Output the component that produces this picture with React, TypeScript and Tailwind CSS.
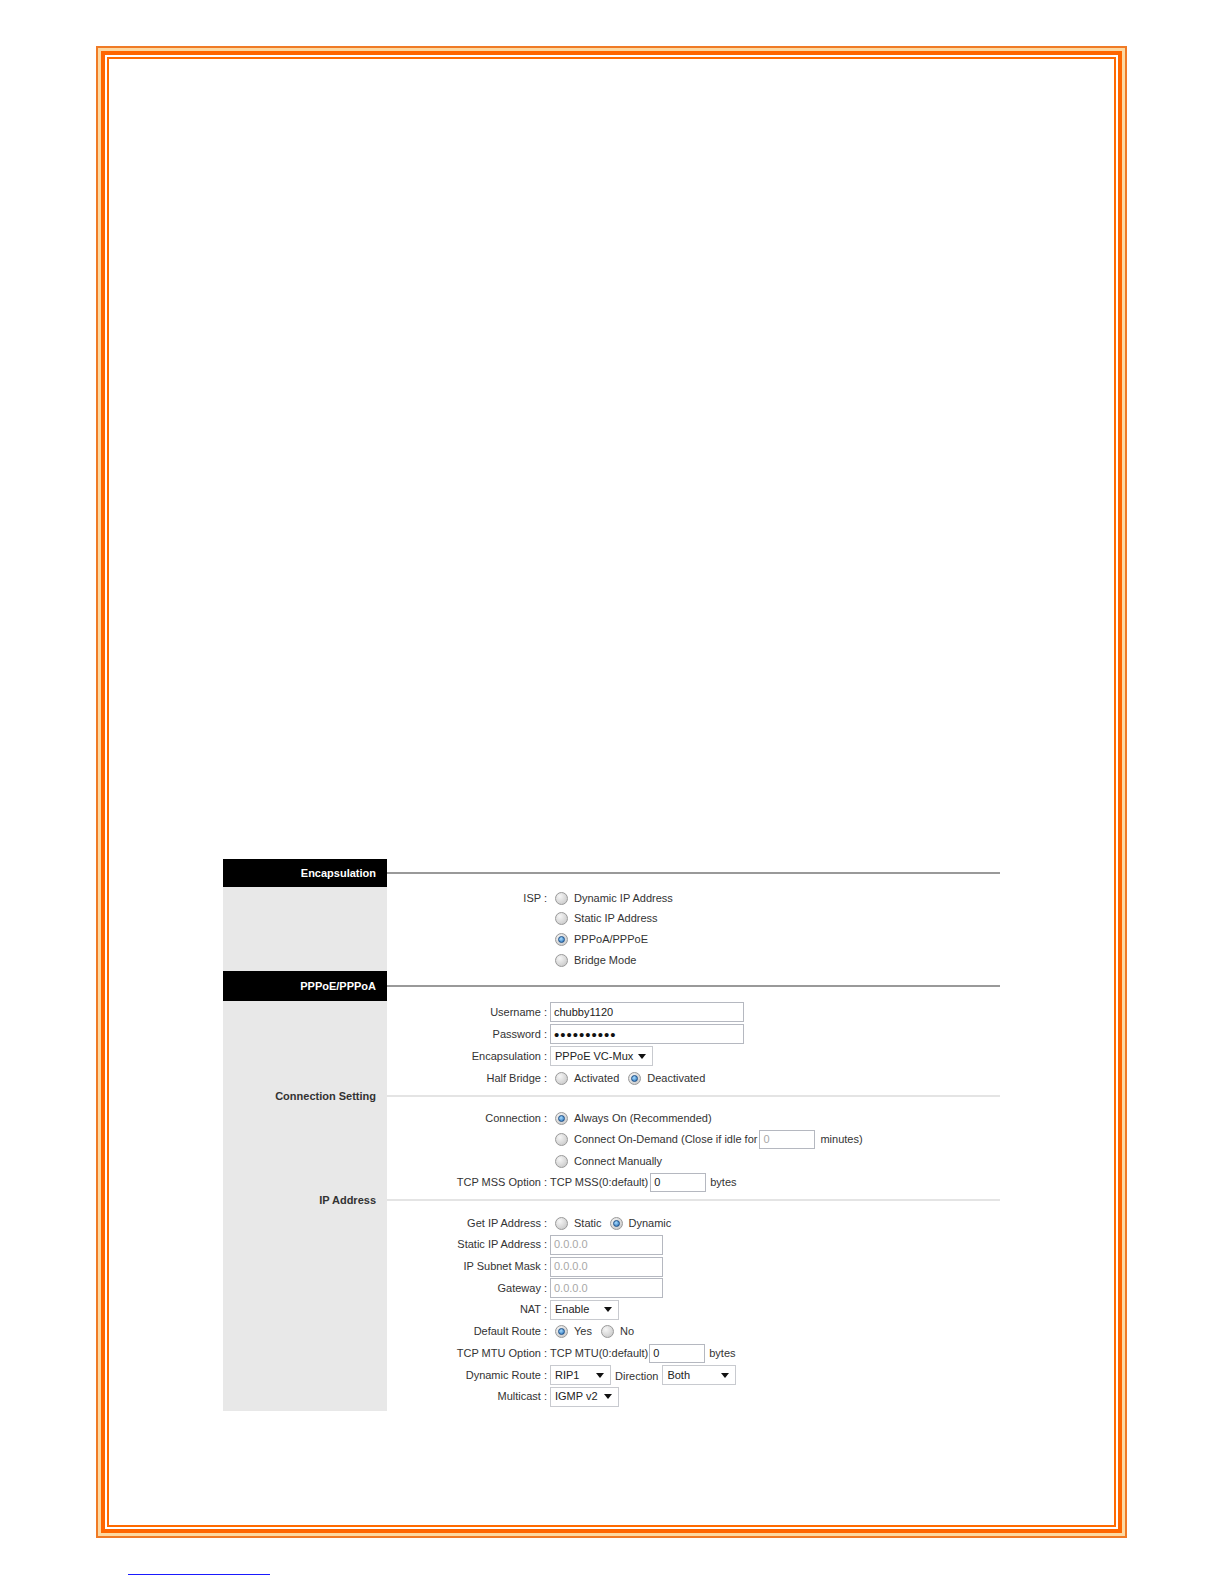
import React from "react";

function Radio({ checked }: { checked?: boolean }) {
  return (
    <span className="inline-flex w-[13px] h-[13px] rounded-full border border-[#999999] bg-[radial-gradient(circle_at_35%_30%,#f6f6f6,#c2c2c2)] items-center justify-center shrink-0">
      {checked && (
        <span className="w-[7px] h-[7px] rounded-full border border-[#1d4f86] bg-[radial-gradient(circle_at_40%_35%,#a8dcff,#2069b4)]" />
      )}
    </span>
  );
}

function RadioOpt({ checked, label, gap = "ml-[5px]" }: { checked?: boolean; label: string; gap?: string }) {
  return (
    <span className={`inline-flex items-center ${gap}`}>
      <Radio checked={checked} />
      <span className="ml-[6px]">{label}</span>
    </span>
  );
}

function TextBox({ value, w, disabled, h = "h-[20px]" }: { value: string; w: string; disabled?: boolean; h?: string }) {
  return (
    <span
      className={`inline-flex items-center ${w} ${h} border border-[#b5b8c0] bg-white px-[3px] ${
        disabled ? "text-[#a8a8a8]" : "text-[#222]"
      }`}
    >
      {value}
    </span>
  );
}

function Select({ value, w }: { value: string; w: string }) {
  return (
    <span className={`inline-flex items-center justify-between ${w} h-[20px] border border-[#c8cacf] bg-white pl-[4px] pr-[6px] text-[#222]`}>
      <span>{value}</span>
      <svg width="8" height="5" viewBox="0 0 8 5" className="shrink-0 ml-[4px]">
        <path d="M0 0 L8 0 L4 5 Z" fill="#111" />
      </svg>
    </span>
  );
}

function Row({ label, children, h = "h-[21.7px]" }: { label?: string; children?: React.ReactNode; h?: string }) {
  return (
    <div className={`flex items-center ${h}`}>
      <div className="w-[163px] text-right pr-[3px] whitespace-nowrap">{label ? `${label} :` : ""}</div>
      <div className="flex items-center whitespace-nowrap">{children}</div>
    </div>
  );
}

function Header({ title, h }: { title: string; h: string }) {
  return (
    <div className={`flex ${h}`}>
      <div className="w-[164px] bg-black text-white font-bold flex items-center justify-end pr-[11px]">{title}</div>
      <div className="flex-1 flex items-center">
        <div className="w-full h-[2px] bg-[#999999]" />
      </div>
    </div>
  );
}

function SubHeader({ title }: { title: string }) {
  return (
    <div className="flex h-[14px]">
      <div className="w-[164px] bg-[#e8e8e8] font-bold flex items-center justify-end pr-[11px] text-[#333]">{title}</div>
      <div className="flex-1 flex items-center">
        <div className="w-full h-[2px] bg-[#e4e4e4]" />
      </div>
    </div>
  );
}

function Block({ children, className = "" }: { children: React.ReactNode; className?: string }) {
  return (
    <div className="flex">
      <div className="w-[164px] bg-[#e8e8e8] shrink-0" />
      <div className={`flex-1 ${className}`}>{children}</div>
    </div>
  );
}

export default function App() {
  return (
    <div className="w-[1224px] h-[1584px] bg-white overflow-hidden" style={{ fontFamily: '"Liberation Sans", Arial, sans-serif' }}>
      <div className="pt-[46px] pl-[96px]">
        <div className="w-[1031px] h-[1492px] border-[2px] border-[#f07a25] bg-[#fcd9a2] p-[3px]">
          <div className="w-full h-full border-[4px] border-[#ff6600] bg-white p-[2px]">
            <div className="w-full h-full border-[2px] border-[#ff6a00] bg-white">
              <div className="pl-[114px] pt-[800px]">
                <div className="w-[777px] text-[11px] text-[#333] leading-[13px]">
                  <Header title="Encapsulation" h="h-[28px]" />
                  <Block className="pt-[1px] pb-[1px]">
                    <Row label="ISP" h="h-[20.6px]">
                      <RadioOpt label="Dynamic IP Address" />
                    </Row>
                    <Row h="h-[20.6px]">
                      <RadioOpt label="Static IP Address" />
                    </Row>
                    <Row h="h-[20.6px]">
                      <RadioOpt checked label="PPPoA/PPPoE" />
                    </Row>
                    <Row h="h-[20.6px]">
                      <RadioOpt label="Bridge Mode" />
                    </Row>
                  </Block>
                  <Header title="PPPoE/PPPoA" h="h-[30px]" />
                  <Block>
                    <Row label="Username" h="h-[22px]">
                      <TextBox value="chubby1120" w="w-[194px]" />
                    </Row>
                    <Row label="Password" h="h-[22px]">
                      <span className="inline-flex items-center w-[194px] h-[20px] border border-[#b5b8c0] bg-white pl-[3px] text-[#111] text-[15px] tracking-[1px]">
                        ••••••••••
                      </span>
                    </Row>
                    <Row label="Encapsulation" h="h-[22px]">
                      <Select value="PPPoE VC-Mux" w="w-[103px]" />
                    </Row>
                    <Row label="Half Bridge" h="h-[22px]">
                      <RadioOpt label="Activated" />
                      <RadioOpt checked label="Deactivated" gap="ml-[9px]" />
                    </Row>
                  </Block>
                  <SubHeader title="Connection Setting" />
                  <Block className="pt-[4px]">
                    <Row label="Connection" h="h-[21.5px]">
                      <RadioOpt checked label="Always On (Recommended)" />
                    </Row>
                    <Row h="h-[21.5px]">
                      <RadioOpt label="Connect On-Demand (Close if idle for" />
                      <span className="ml-[2px]">
                        <TextBox value="0" w="w-[56px]" h="h-[19px]" disabled />
                      </span>
                      <span className="ml-[5px]">minutes)</span>
                    </Row>
                    <Row h="h-[21.5px]">
                      <RadioOpt label="Connect Manually" />
                    </Row>
                    <Row label="TCP MSS Option" h="h-[21.5px]">
                      <span>TCP MSS(0:default)</span>
                      <span className="ml-[2px]">
                        <TextBox value="0" w="w-[56px]" h="h-[19px]" />
                      </span>
                      <span className="ml-[4px]">bytes</span>
                    </Row>
                  </Block>
                  <SubHeader title="IP Address" />
                  <Block className="pt-[5px] pb-[3px]">
                    <Row label="Get IP Address">
                      <RadioOpt label="Static" />
                      <RadioOpt checked label="Dynamic" gap="ml-[8px]" />
                    </Row>
                    <Row label="Static IP Address">
                      <TextBox value="0.0.0.0" w="w-[113px]" disabled />
                    </Row>
                    <Row label="IP Subnet Mask">
                      <TextBox value="0.0.0.0" w="w-[113px]" disabled />
                    </Row>
                    <Row label="Gateway">
                      <TextBox value="0.0.0.0" w="w-[113px]" disabled />
                    </Row>
                    <Row label="NAT">
                      <Select value="Enable" w="w-[69px]" />
                    </Row>
                    <Row label="Default Route">
                      <RadioOpt checked label="Yes" />
                      <RadioOpt label="No" gap="ml-[9px]" />
                    </Row>
                    <Row label="TCP MTU Option">
                      <span>TCP MTU(0:default)</span>
                      <span className="ml-[1px]">
                        <TextBox value="0" w="w-[56px]" h="h-[19px]" />
                      </span>
                      <span className="ml-[4px]">bytes</span>
                    </Row>
                    <Row label="Dynamic Route">
                      <Select value="RIP1" w="w-[61px]" />
                      <span className="ml-[4px] mt-[3px]">Direction</span>
                      <span className="ml-[4px]">
                        <Select value="Both" w="w-[74px]" />
                      </span>
                    </Row>
                    <Row label="Multicast">
                      <Select value="IGMP v2" w="w-[69px]" />
                    </Row>
                  </Block>
                </div>
              </div>
            </div>
          </div>
        </div>
        <div className="mt-[36px] ml-[32px] w-[142px] h-[1px] bg-[#1a1aff]" />
      </div>
    </div>
  );
}
